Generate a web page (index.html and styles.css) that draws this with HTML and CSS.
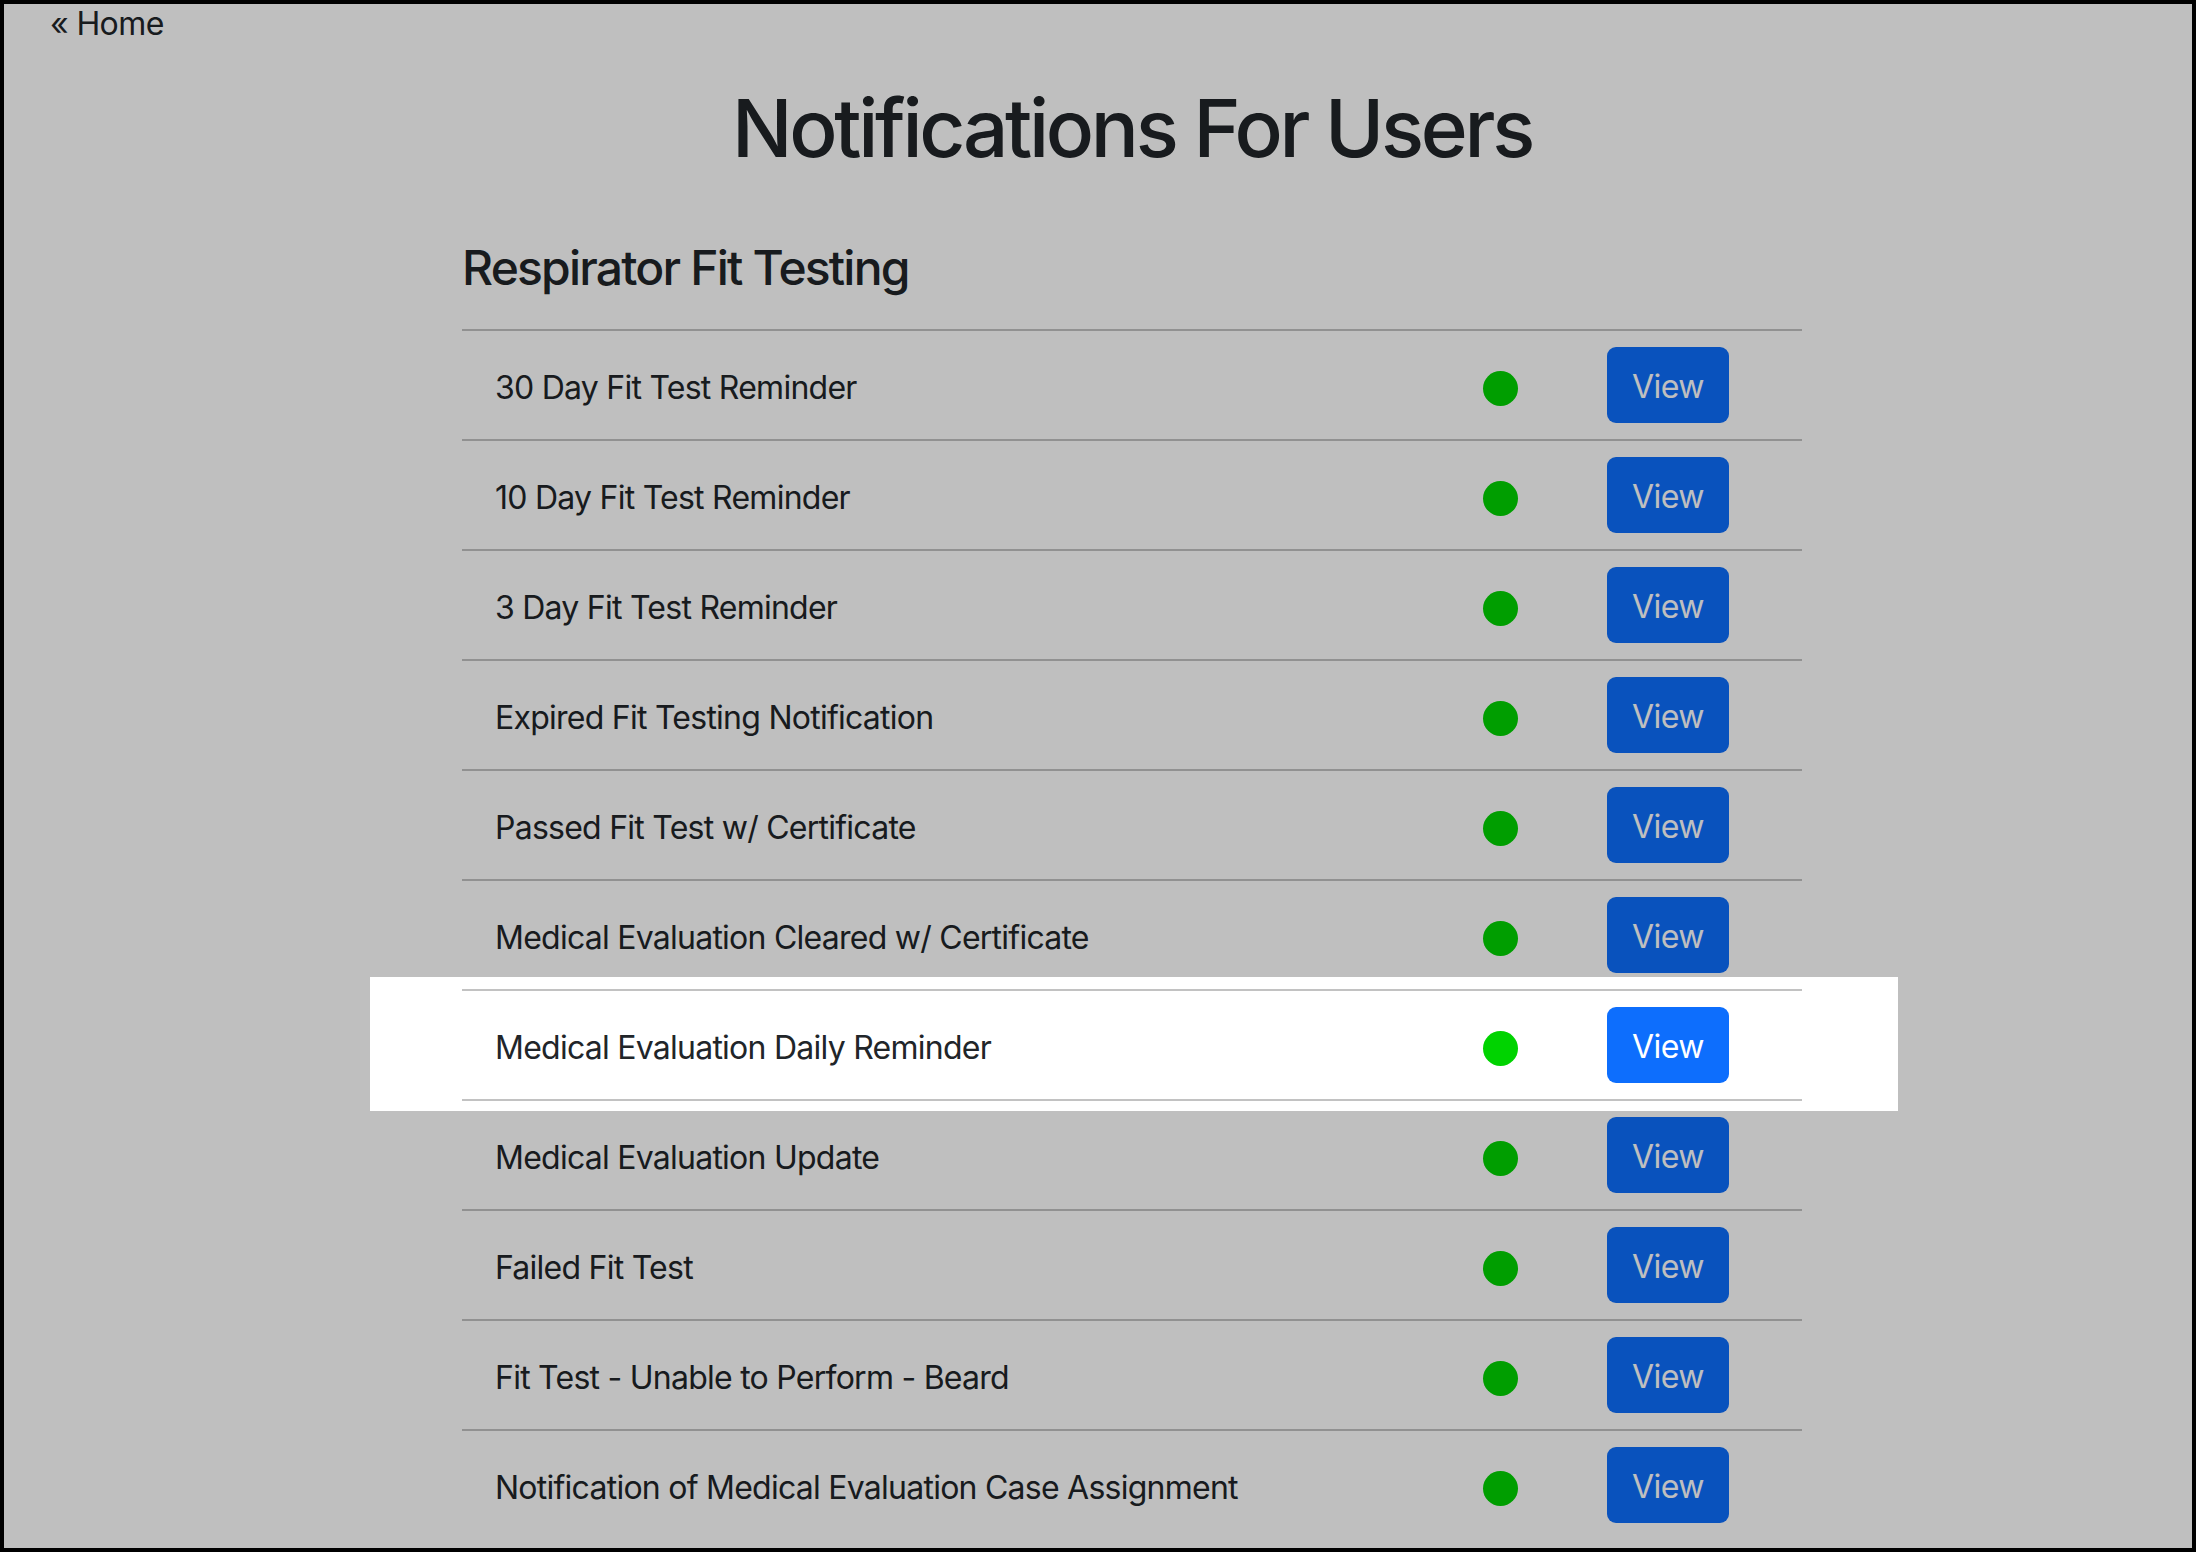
FILE: index.html
```html
<!DOCTYPE html>
<html lang="en">
<head>
<meta charset="utf-8">
<title>Notifications For Users</title>
<link rel="stylesheet" href="styles.css">
</head>
<body>
<div class="frame">
  <a class="home" href="#">&laquo; Home</a>
  <main class="content">
    <div class="container">
      <h1 class="title">Notifications For Users</h1>
      <h4 class="section-title">Respirator Fit Testing</h4>
      <div class="list">
        <div class="row"><span class="name">30 Day Fit Test Reminder</span><span class="dot"></span><a class="btn" href="#">View</a></div>
        <div class="row"><span class="name">10 Day Fit Test Reminder</span><span class="dot"></span><a class="btn" href="#">View</a></div>
        <div class="row"><span class="name">3 Day Fit Test Reminder</span><span class="dot"></span><a class="btn" href="#">View</a></div>
        <div class="row"><span class="name">Expired Fit Testing Notification</span><span class="dot"></span><a class="btn" href="#">View</a></div>
        <div class="row"><span class="name">Passed Fit Test w/ Certificate</span><span class="dot"></span><a class="btn" href="#">View</a></div>
        <div class="row"><span class="name">Medical Evaluation Cleared w/ Certificate</span><span class="dot"></span><a class="btn" href="#">View</a></div>
        <div class="row"><span class="name">Medical Evaluation Daily Reminder</span><span class="dot"></span><a class="btn" href="#">View</a><div class="spotlight"></div></div>
        <div class="row"><span class="name">Medical Evaluation Update</span><span class="dot"></span><a class="btn" href="#">View</a></div>
        <div class="row"><span class="name">Failed Fit Test</span><span class="dot"></span><a class="btn" href="#">View</a></div>
        <div class="row"><span class="name">Fit Test - Unable to Perform - Beard</span><span class="dot"></span><a class="btn" href="#">View</a></div>
        <div class="row"><span class="name">Notification of Medical Evaluation Case Assignment</span><span class="dot"></span><a class="btn" href="#">View</a></div>
      </div>
    </div>
  </main>
</div>
</body>
</html>
```

FILE: styles.css
```css
html, body {
  margin: 0;
  padding: 0;
}

body {
  background: #000;
  color: #212529;
  font-family: Inter, "Noto Sans", "Liberation Sans", sans-serif;
}

.frame {
  box-sizing: border-box;
  width: 2196px;
  height: 1552px;
  border: 4px solid #000;
  background: #fff;
  overflow: hidden;
  position: relative;
}

.home {
  display: block;
  margin-left: 46px;
  padding-top: 1px;
  font-size: 32px;
  line-height: 38px;
  letter-spacing: -0.6px;
  color: #212529;
  text-decoration: none;
}

.content {
  padding-left: 68px;
}

.container {
  width: 1340px;
  margin: 0 auto;
}

.title {
  margin: 37px 0 0;
  font-size: 80px;
  font-weight: 500;
  line-height: 96px;
  letter-spacing: -3.3px;
  text-align: center;
}

.section-title {
  margin: 63px 0 32px;
  font-size: 48px;
  font-weight: 500;
  line-height: 58px;
  letter-spacing: -1.8px;
}

.row {
  position: relative;
  display: grid;
  grid-template-columns: 1fr 140px 232px;
  align-items: center;
  height: 108px;
  border-top: 2px solid #c2c2c2;
}

.name {
  padding: 5px 0 0 33px;
  font-size: 32px;
  line-height: 48px;
  letter-spacing: -0.75px;
}

.dot {
  justify-self: center;
  width: 35px;
  height: 35px;
  margin-top: 7px;
  border-radius: 50%;
  background: #00d300;
}

.btn {
  justify-self: start;
  display: flex;
  align-items: center;
  justify-content: center;
  box-sizing: border-box;
  width: 122px;
  height: 76px;
  margin-left: 37px;
  padding-top: 2px;
  border-radius: 9px;
  background: #0d6efd;
  color: #fff;
  font-size: 32px;
  letter-spacing: -0.5px;
  text-decoration: none;
}

/* tour spotlight: clear window around the current row, dim everything else */
.spotlight {
  position: absolute;
  top: -14px;
  bottom: -12px;
  left: -92px;
  right: -96px;
  box-shadow: 0 0 0 4000px rgba(0, 0, 0, 0.25);
  z-index: 5;
  pointer-events: none;
}
```
